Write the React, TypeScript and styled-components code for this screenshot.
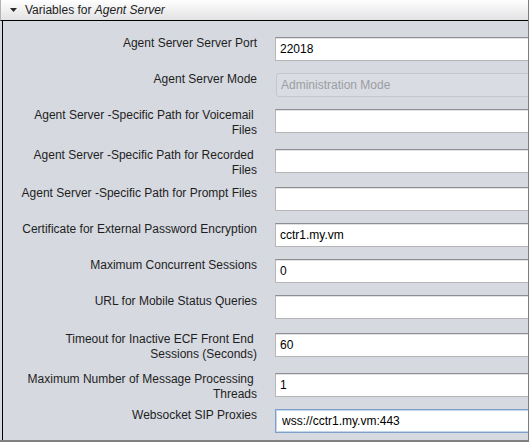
import React from "react";
import styled, { createGlobalStyle } from "styled-components";

const GlobalStyle = createGlobalStyle`
  html, body {
    margin: 0;
    padding: 0;
    background: #ffffff;
  }
  * {
    box-sizing: border-box;
  }
`;

const Frame = styled.div`
  width: 529px;
  height: 442px;
  background: #d6d9e0;
  border-right: 1px solid #7c7c7c;
  border-bottom: 2px solid #808080;
  overflow: hidden;
  display: flex;
  flex-direction: column;
  font-family: "Liberation Sans", Arial, sans-serif;
  font-size: 12px;
`;

const Header = styled.div`
  height: 21px;
  flex: none;
  display: flex;
  align-items: center;
  gap: 8px;
  padding-left: 9px;
  background: linear-gradient(#fefefe, #f3f3f4 40%, #e1e2e4);
  border-left: 1px solid #b4b4b4;
  border-bottom: 1px solid #000000;
  color: #1c1c1c;
`;

const Arrow = styled.svg`
  width: 7px;
  height: 4px;
  margin-top: -1px;
`;

const Title = styled.span`
  line-height: 15px;
  em {
    font-style: italic;
  }
`;

const Body = styled.div`
  flex: 1;
  margin-left: 2px;
  border-left: 1px solid #000000;
  padding-top: 16px;
  display: flex;
  flex-direction: column;
  gap: 12px;
  overflow: hidden;
`;

const Row = styled.div<{ $h: number }>`
  height: ${(p) => p.$h}px;
  display: flex;
  align-items: flex-start;
`;

const Label = styled.div`
  width: 254px;
  flex: none;
  margin-right: 18px;
  margin-top: -1px;
  text-align: right;
  white-space: pre;
  line-height: 15px;
  color: #1e1e1e;
`;

const Field = styled.input<{ $focus?: boolean }>`
  flex: none;
  width: 262px;
  height: 24px;
  margin: 0;
  padding: 0 0 0 ${(p) => (p.$focus ? 6 : 4)}px;
  font-family: "Liberation Sans", Arial, sans-serif;
  font-size: 12px;
  color: #000000;
  background: #ffffff;
  border: 1px solid ${(p) => (p.$focus ? "#7e9fc8" : "#b6b6b6")};
  border-top-color: ${(p) => (p.$focus ? "#7e9fc8" : "#8c8e92")};
  box-shadow: ${(p) =>
    p.$focus ? "inset 0 0 0 1px #c4d6ec" : "inset 0 1px 0 #e2e2e2"};
  outline: none;
`;

const Select = styled.input`
  flex: none;
  width: 262px;
  height: 24px;
  margin: 0 0 0 1px;
  padding: 0 0 0 4px;
  font-family: "Liberation Sans", Arial, sans-serif;
  font-size: 12px;
  color: #9c9ea2;
  -webkit-text-fill-color: #9c9ea2;
  background: #d9dce2;
  border: 1px solid #c3c6cc;
  border-radius: 3px;
  outline: none;
`;

type Item = {
  label: string;
  value?: string;
  h: number;
  select?: boolean;
  focus?: boolean;
};

const items: Item[] = [
  { label: "Agent Server Server Port", value: "22018", h: 24 },
  { label: "Agent Server Mode", value: "Administration Mode", h: 24, select: true },
  { label: "Agent Server -Specific Path for Voicemail \nFiles", h: 28 },
  { label: "Agent Server -Specific Path for Recorded \nFiles", h: 26 },
  { label: "Agent Server -Specific Path for Prompt Files", h: 24 },
  { label: "Certificate for External Password Encryption", value: "cctr1.my.vm", h: 24 },
  { label: "Maximum Concurrent Sessions", value: "0", h: 24 },
  { label: "URL for Mobile Status Queries", h: 26 },
  { label: "Timeout for Inactive ECF Front End \nSessions (Seconds)", value: "60", h: 28 },
  { label: "Maximum Number of Message Processing \nThreads", value: "1", h: 24 },
  { label: "Websocket SIP Proxies", value: "wss://cctr1.my.vm:443", h: 24, focus: true },
];

const App = () => {
  return (
    <>
      <GlobalStyle />
      <Frame>
        <Header>
          <Arrow viewBox="0 0 7 4">
            <path d="M0 0 H7 L3.5 4 Z" fill="#2a2a2a" />
          </Arrow>
          <Title>
            Variables for <em>Agent Server</em>
          </Title>
        </Header>
        <Body>
          {items.map((it) => (
            <Row key={it.label} $h={it.h}>
              <Label>{it.label}</Label>
              {it.select ? (
                <Select disabled value={it.value} readOnly />
              ) : (
                <Field $focus={it.focus} value={it.value ?? ""} readOnly />
              )}
            </Row>
          ))}
        </Body>
      </Frame>
    </>
  );
};

export default App;
